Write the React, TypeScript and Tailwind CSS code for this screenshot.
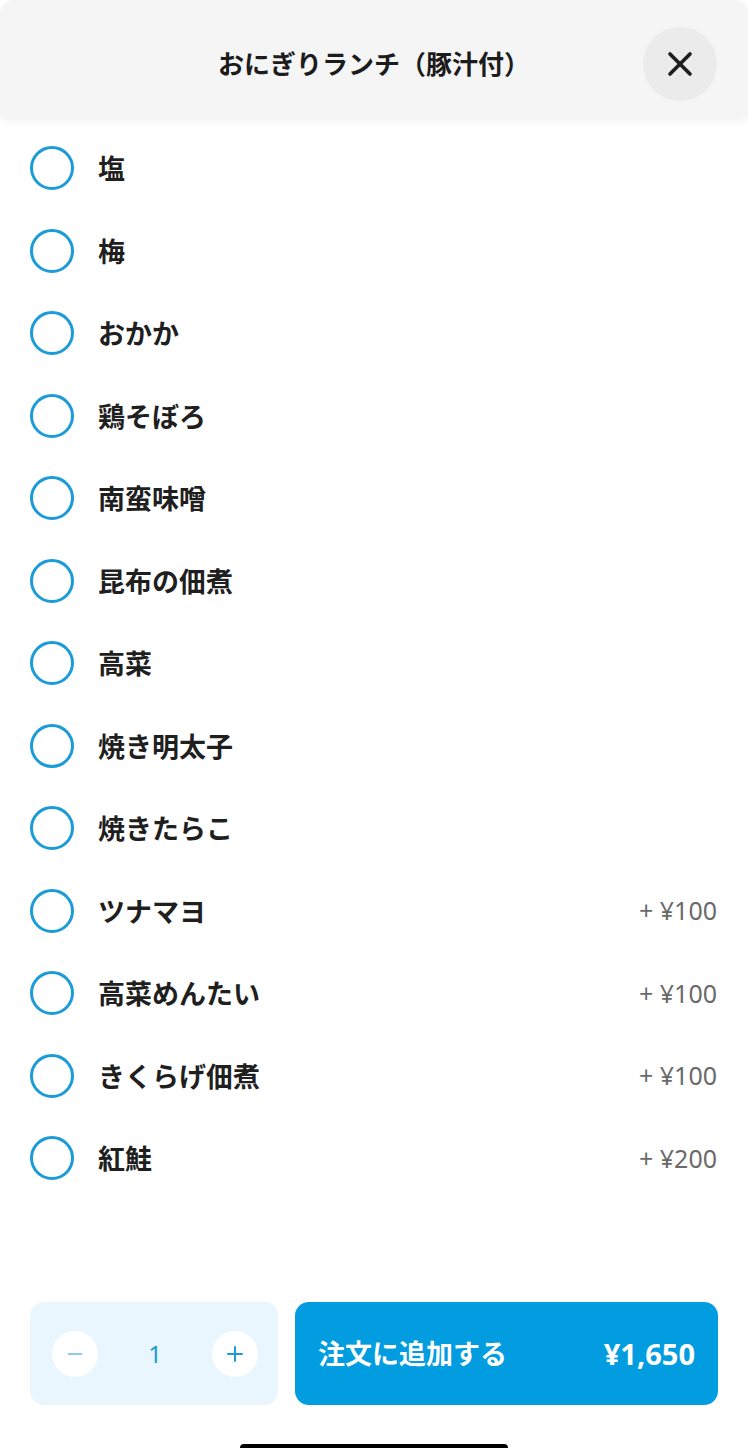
import { X, Minus, Plus } from 'lucide-react';

const items: { name: string; price?: string }[] = [
  { name: '塩' },
  { name: '梅' },
  { name: 'おかか' },
  { name: '鶏そぼろ' },
  { name: '南蛮味噌' },
  { name: '昆布の佃煮' },
  { name: '高菜' },
  { name: '焼き明太子' },
  { name: '焼きたらこ' },
  { name: 'ツナマヨ', price: '+ ¥100' },
  { name: '高菜めんたい', price: '+ ¥100' },
  { name: 'きくらげ佃煮', price: '+ ¥100' },
  { name: '紅鮭', price: '+ ¥200' },
];

const jp = { fontFamily: '"Noto Sans CJK JP", "Noto Sans", sans-serif' };

export default function App() {
  return (
    <div className="h-[1448px] w-full bg-white flex flex-col overflow-hidden" style={jp}>
      {/* Header */}
      <div className="relative h-[116px] shrink-0 bg-[#f5f5f5] rounded-t-[14px] flex items-center justify-center pt-[8px] shadow-[0_4px_10px_rgba(0,0,0,0.06)] z-10">
        <h1 className="text-[26px] font-bold text-[#1c1c1c]">おにぎりランチ（豚汁付）</h1>
        <button className="absolute right-[31px] top-[27px] w-[74px] h-[74px] rounded-full bg-[#ebebeb] flex items-center justify-center">
          <X className="w-[40px] h-[40px] text-[#1e1e1e]" strokeWidth={2.2} />
        </button>
      </div>

      {/* Options */}
      <div className="flex-1 pt-[11px]">
        {items.map((item) => (
          <div key={item.name} className="h-[82.5px] flex items-center pl-[30px] pr-[31px]">
            <div className="w-[44px] h-[44px] rounded-full border-[3px] border-[#1b9bd8] shrink-0" />
            <span className="ml-[24px] text-[27px] font-semibold text-[#1f1f1f] flex-1">{item.name}</span>
            {item.price && (
              <span className="text-[25px] text-[#6a6a6a]" style={{ fontFamily: '"Noto Sans", sans-serif' }}>
                {item.price}
              </span>
            )}
          </div>
        ))}
      </div>

      {/* Bottom bar */}
      <div className="shrink-0 px-[30px] pb-[43px] flex gap-[17px]">
        <div className="w-[248px] h-[103px] rounded-[14px] bg-[#eaf6fd] flex items-center justify-between pl-[22px] pr-[20px]">
          <button className="w-[46px] h-[46px] rounded-full bg-white flex items-center justify-center">
            <Minus className="w-[22px] h-[22px] text-[#8ccbea]" strokeWidth={2} />
          </button>
          <span className="text-[24px] text-[#1b9bd8]" style={{ fontFamily: '"Noto Sans", sans-serif' }}>1</span>
          <button className="w-[46px] h-[46px] rounded-full bg-white flex items-center justify-center">
            <Plus className="w-[24px] h-[24px] text-[#1b9bd8]" strokeWidth={2} />
          </button>
        </div>
        <button className="flex-1 h-[103px] rounded-[14px] bg-[#029de0] flex items-center justify-between px-[23px] text-white">
          <span className="text-[27px] font-bold">注文に追加する</span>
          <span className="text-[29px] font-bold" style={{ fontFamily: '"Noto Sans", sans-serif' }}>¥1,650</span>
        </button>
      </div>
      <div className="relative h-0">
        <div className="absolute left-[240px] bottom-0 w-[268px] h-[4px] rounded-t-full bg-black" />
      </div>
    </div>
  );
}
